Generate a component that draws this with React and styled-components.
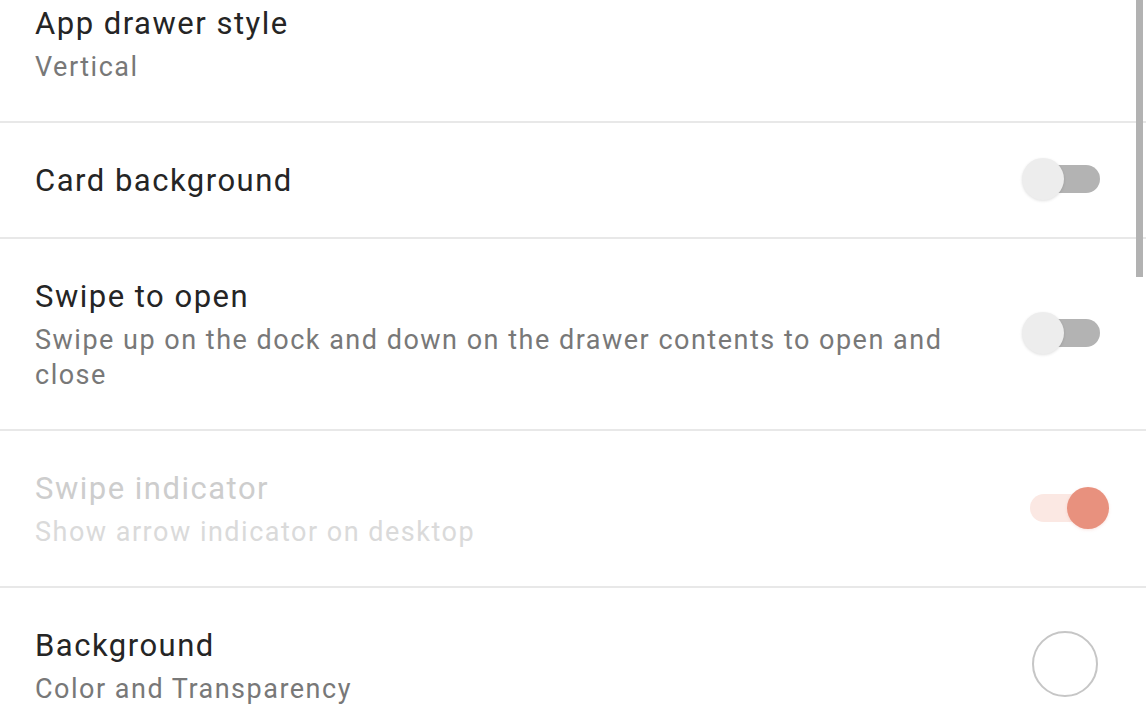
import styled, { createGlobalStyle } from "styled-components";

const GlobalStyle = createGlobalStyle`
  html, body {
    margin: 0;
    padding: 0;
    background: #ffffff;
    overflow: hidden;
  }
  body {
    font-family: Roboto, "Noto Sans", "Liberation Sans", sans-serif;
  }
`;

const settings = [
  { title: "App drawer style", summary: "Vertical" },
  { title: "Card background", control: "switch", on: false },
  {
    title: "Swipe to open",
    summary: "Swipe up on the dock and down on the drawer contents to open and close",
    control: "switch",
    on: false,
  },
  {
    title: "Swipe indicator",
    summary: "Show arrow indicator on desktop",
    control: "switch",
    on: true,
    disabled: true,
  },
  { title: "Background", summary: "Color and Transparency", control: "color" },
];

const App = () => {
  return (
    <Screen>
      <GlobalStyle />
      <PrefList>
        {settings.map((item) => (
          <PrefRow key={item.title}>
            <PrefText>
              <PrefTitle $disabled={item.disabled}>{item.title}</PrefTitle>
              {item.summary && <PrefSummary $disabled={item.disabled}>{item.summary}</PrefSummary>}
            </PrefText>
            <Widget>
              {item.control === "switch" && (
                <Switch>
                  <Track $on={item.on} />
                  <Thumb $on={item.on} />
                </Switch>
              )}
              {item.control === "color" && <ColorSwatch />}
            </Widget>
          </PrefRow>
        ))}
      </PrefList>
      <ScrollThumb />
    </Screen>
  );
};

const Screen = styled.div`
  position: relative;
  width: 1146px;
  height: 716px;
  overflow: hidden;
  background: #ffffff;
`;

// list is scrolled a little, so the first row starts above the top edge
const PrefList = styled.div`
  display: flex;
  flex-direction: column;
  margin-top: -34px;
`;

const PrefRow = styled.div`
  display: flex;
  align-items: center;
  gap: 40px;
  padding: 38px 38px 36px 35px;
  border-bottom: 2px solid #e8e8e8;
`;

const PrefText = styled.div`
  flex: 1;
  display: flex;
  flex-direction: column;
  gap: 6px;
`;

const PrefTitle = styled.div`
  font-size: 31px;
  line-height: 40px;
  letter-spacing: 1.5px;
  color: ${(p) => (p.$disabled ? "#cdcdcd" : "#252525")};
`;

const PrefSummary = styled.div`
  font-size: 27px;
  line-height: 35px;
  letter-spacing: 1.5px;
  color: ${(p) => (p.$disabled ? "#dadada" : "#787878")};
`;

const Widget = styled.div`
  flex: 0 0 86px;
  height: 40px;
  display: flex;
  align-items: center;
  justify-content: center;
`;

const Switch = styled.div`
  position: relative;
  width: 86px;
  height: 40px;
`;

const Track = styled.div`
  position: absolute;
  left: 8px;
  top: 4px;
  width: 70px;
  height: 28px;
  border-radius: 14px;
  background: ${(p) => (p.$on ? "#fbe8e3" : "#b3b3b3")};
`;

const Thumb = styled.div`
  position: absolute;
  top: -3px;
  left: ${(p) => (p.$on ? "45px" : "0")};
  width: 42px;
  height: 42px;
  border-radius: 50%;
  background: ${(p) => (p.$on ? "#e8917e" : "#ededed")};
  box-shadow: ${(p) => (p.$on ? "0 1px 3px rgba(232, 145, 126, 0.25)" : "0 1px 3px rgba(0, 0, 0, 0.12)")};
`;

const ColorSwatch = styled.div`
  flex: none;
  width: 62px;
  height: 62px;
  margin-top: -6px;
  border-radius: 50%;
  border: 2.5px solid #c6c6c6;
  background: #ffffff;
`;

const ScrollThumb = styled.div`
  position: absolute;
  top: 0;
  right: 3px;
  width: 7px;
  height: 277px;
  background: #b2b2b2;
`;

export default App;
